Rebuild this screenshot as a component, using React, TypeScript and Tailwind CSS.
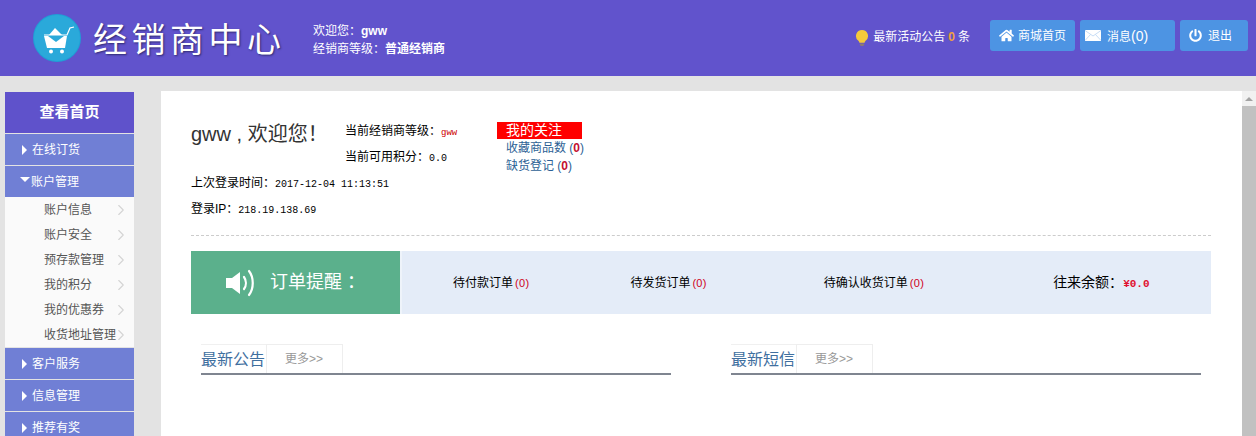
import { ChevronRight } from "lucide-react";
import { FaHome, FaPowerOff } from "react-icons/fa";

const cjk = "font-['Liberation_Sans','Noto_Sans_CJK_SC',sans-serif]";

function Logo() {
  return (
    <svg width="48" height="48" viewBox="0 0 48 48" className="shrink-0">
      <circle cx="24" cy="24" r="24" fill="#1f9fd6" />
      <circle cx="24" cy="24" r="23" fill="#2aa9da" />
      <path d="M11 21h23l3-7 4-1" fill="none" stroke="#fff" strokeWidth="1.2" />
      <path d="M11 22h23l-2 12H14z" fill="#fff" />
      <path d="M16 21l6-7 7 7z" fill="#fff" />
      <path d="M15 22l8 6 8-6z" fill="#2aa9da" />
      <circle cx="18" cy="37.500" r="2" fill="#fff" />
      <circle cx="29" cy="37.500" r="2" fill="#fff" />
    </svg>
  );
}

function Bulb() {
  return (
    <svg width="14" height="17" viewBox="0 0 14 17">
      <path d="M7 1a6 6 0 0 0-3.600 10.800c.7.6.9 1.200 1 2h5.200c.1-.8.3-1.400 1-2A6 6 0 0 0 7 1z" fill="#f4c93b" />
      <path d="M4.800 14.500h4.400v1.500l-1.200 1H6l-1.200-1z" fill="#8d7a72" />
    </svg>
  );
}

function Mail() {
  return (
    <svg width="16" height="11" viewBox="0 0 16 11">
      <rect width="16" height="11" rx="0.5" fill="#fff" />
      <path d="M0 .5l8 5.500 8-5.500M0 10.500l5.500-6M16 10.500l-5.500-6" fill="none" stroke="#b9d4f2" strokeWidth="0.8" />
    </svg>
  );
}

function Speaker() {
  return (
    <svg width="32" height="28" viewBox="0 0 32 28" fill="none">
      <path d="M0 9h6l8-6v22l-8-6H0z" fill="#fff" />
      <path d="M18 8c2.500 3.500 2.500 8.500 0 12" stroke="#fff" strokeWidth="2.200" strokeLinecap="round" />
      <path d="M23 2c5 6.500 5 17.500 0 24" stroke="#fff" strokeWidth="2.200" strokeLinecap="round" />
    </svg>
  );
}

function TopButton({ icon, label, className }: { icon: React.ReactNode; label: React.ReactNode; className: string }) {
  return (
    <div className={`h-[31px] rounded-[3px] bg-[#4d94e3] text-white text-[12px] flex items-center ${className}`}>
      {icon}
      <span className="pt-px">{label}</span>
    </div>
  );
}

function NavRow({ label, open }: { label: string; open?: boolean }) {
  return (
    <div className="h-[31px] mb-px bg-[#707fd5] text-white text-[12px] flex items-center pl-[17px] shrink-0">
      {open ? (
        <span className="w-0 h-0 border-x-[5px] border-x-transparent border-t-[5px] border-t-white mr-px -ml-[2px] -mt-1" />
      ) : (
        <span className="w-0 h-0 border-y-[5px] border-y-transparent border-l-[5px] border-l-white mr-[5px]" />
      )}
      <span className="pt-px">{label}</span>
    </div>
  );
}

function SubRow({ label }: { label: string }) {
  return (
    <div className="h-[25px] pl-[39px] flex items-center text-[12px] text-[#555] whitespace-nowrap">
      <span className="w-[68px] pt-px">{label}</span>
      <ChevronRight size={18} strokeWidth={1.500} className="text-[#d4d4d4]" />
    </div>
  );
}

function SectionHead({ title }: { title: string }) {
  return (
    <div className="w-[470px] h-[31px] border-b-[2px] border-b-[#7f8590] flex">
      <div className="w-[65px] text-[16px] leading-[30px] text-[#3f6f9f] border-t border-t-[#f0f0f0]">{title}</div>
      <div className="w-[77px] border border-[#eeeeee] border-b-0 text-[12px] leading-[29px] text-[#999] pl-[18px]">更多&gt;&gt;</div>
    </div>
  );
}

function Num({ children }: { children: React.ReactNode }) {
  return <span className="font-['Liberation_Mono',monospace] text-[10px] leading-none">{children}</span>;
}

function OrderItem({ label, className }: { label: string; className: string }) {
  return (
    <div className={`text-[12px] text-black whitespace-nowrap ${className}`}>
      {label}
      <span className="text-[#d0021b] text-[11px] ml-[2px] tracking-[0.3px]">(0)</span>
    </div>
  );
}

export default function App() {
  return (
    <div className={`w-[1256px] h-[436px] overflow-hidden bg-[#e3e3e3] ${cjk}`}>
      {/* top bar */}
      <div className="h-[76px] bg-[#6153cc] flex items-start text-white">
        <div className="ml-[33px] mt-[14px]"><Logo /></div>
        <div className="ml-[12px] mt-[14px] w-[220px] text-[34px] leading-[48px] tracking-[4.500px] font-['Noto_Sans_CJK_SC',serif] [text-shadow:1px_1px_2px_#2f2a70] whitespace-nowrap">
          经销商中心
        </div>
        <div className="mt-[22px] text-[12px] leading-[18px] whitespace-nowrap">
          <div>欢迎您：<b className="font-bold">gww</b></div>
          <div>经销商等级：<b className="font-bold">普通经销商</b></div>
        </div>
        <div className="ml-auto mt-[28px] flex items-center text-[12px] whitespace-nowrap mr-[20px]">
          <Bulb />
          <span className="ml-[4px]">最新活动公告</span>
          <b className="text-[#f0a040] mx-[3px]">0</b>
          <span>条</span>
        </div>
        <div className="mt-[20px] flex gap-[5px] mr-[8px]">
          <TopButton className="w-[85px] pl-[9px] gap-[4px]" icon={<FaHome size={15} />} label="商城首页" />
          <TopButton className="w-[95px] pl-[5px] gap-[6px]" icon={<Mail />} label={<>消息<span className="text-[14px]">(0)</span></>} />
          <TopButton className="w-[68px] pl-[9px] gap-[6px]" icon={<FaPowerOff size={13} />} label="退出" />
        </div>
      </div>

      <div className="flex h-[360px] pt-[15px]">
        {/* sidebar */}
        <div className="w-[129px] ml-[5px] mt-px shrink-0 flex flex-col">
          <div className="h-[41px] mb-px bg-[#5f52cb] text-white text-[15px] font-bold flex items-center justify-center shrink-0">查看首页</div>
          <NavRow label="在线订货" />
          <NavRow label="账户管理" open />
          <div className="h-[150px] -mt-px mb-px bg-[#fafafa] shrink-0">
            <SubRow label="账户信息" />
            <SubRow label="账户安全" />
            <SubRow label="预存款管理" />
            <SubRow label="我的积分" />
            <SubRow label="我的优惠券" />
            <SubRow label="收货地址管理" />
          </div>
          <NavRow label="客户服务" />
          <NavRow label="信息管理" />
          <NavRow label="推荐有奖" />
        </div>

        {/* main panel */}
        <div className="ml-[27px] w-[1081px] bg-white pl-[30px] pr-[31px] shrink-0">
          <div className="flex h-[145px] border-b border-dashed border-b-[#cccccc]">
            <div className="w-[306px] text-[12px] text-black">
              <div className="flex h-[79px]">
                <div className="w-[154px] pt-[31px] text-[20px] leading-[24px] text-[#333] whitespace-nowrap">gww , 欢迎您！</div>
                <div className="pt-[27px] leading-[26px] whitespace-nowrap">
                  <div>当前经销商等级：<span className="text-[#c00] font-['Liberation_Mono',monospace] text-[9px] leading-none">gww</span></div>
                  <div>当前可用积分：<Num>0.0</Num></div>
                </div>
              </div>
              <div className="leading-[26px] whitespace-nowrap">
                <div>上次登录时间：<Num>2017-12-04 11:13:51</Num></div>
                <div>登录IP：<Num>218.19.138.69</Num></div>
              </div>
            </div>
            <div className="pt-[31px] text-[12px] leading-[18px] text-[#2d5f95] whitespace-nowrap">
              <div className="w-[85px] h-[17px] bg-[#ff0000] text-white text-[14px] pl-[9px] leading-[17px]">我的关注</div>
              <div className="pl-[9px]">收藏商品数 (<b className="text-[#c4102f]">0</b>)</div>
              <div className="pl-[9px]">缺货登记 (<b className="text-[#c4102f]">0</b>)</div>
            </div>
          </div>

          {/* order reminder */}
          <div className="mt-[15px] h-[63px] flex">
            <div className="w-[209px] bg-[#5bb08c] text-white flex items-center pl-[35px] gap-[12px] text-[18px] whitespace-nowrap">
              <Speaker />
              <span>订单提醒<span className="ml-[5px]">：</span></span>
            </div>
            <div className="w-[2px] bg-[#eef3fa]" />
            <div className="flex-1 bg-[#e4ecf8] flex items-center">
              <OrderItem label="待付款订单" className="ml-[51px]" />
              <OrderItem label="待发货订单" className="ml-[101px]" />
              <OrderItem label="待确认收货订单" className="ml-[117px]" />
              <div className="ml-[129px] text-[14px] text-black whitespace-nowrap">
                往来余额：<b className="text-[#e0102f] text-[11px] leading-none font-['Liberation_Mono',monospace]">¥0.0</b>
              </div>
            </div>
          </div>

          {/* notices */}
          <div className="mt-[30px] ml-[10px] flex gap-[60px]">
            <SectionHead title="最新公告" />
            <SectionHead title="最新短信" />
          </div>
        </div>

        {/* scrollbar */}
        <div className="w-[14px] bg-[#f1f1f1] flex flex-col items-center">
          <span className="mt-[6px] w-0 h-0 border-x-[4px] border-x-transparent border-b-[4px] border-b-[#a3a3a3]" />
          <div className="mt-[5px] w-full flex-1 bg-[#c1c1c1]" />
        </div>
      </div>
    </div>
  );
}
